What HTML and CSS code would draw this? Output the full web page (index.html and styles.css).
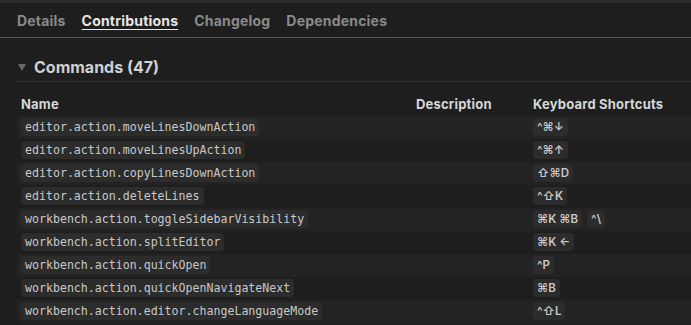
FILE: index.html
```html
<!DOCTYPE html>
<html lang="en">
<head>
    <meta charset="UTF-8">
    <title>Extension - Contributions</title>
    <link rel="stylesheet" href="styles.css">
</head>
<body>
    <div class="top-strip"></div>
    <div class="tabs">
        <span class="tab">Details</span>
        <span class="tab active">Contributions</span>
        <span class="tab">Changelog</span>
        <span class="tab">Dependencies</span>
    </div>
    <div class="content">
        <div class="section-title">
            <span class="twistie"></span>
            <span>Commands (47)</span>
        </div>
        <table class="commands">
            <thead>
                <tr>
                    <th class="col-name">Name</th>
                    <th class="col-desc">Description</th>
                    <th>Keyboard Shortcuts</th>
                </tr>
            </thead>
            <tbody>
                <tr>
                    <td><code>editor.action.moveLinesDownAction</code></td>
                    <td></td>
                    <td><kbd>^⌘↓</kbd></td>
                </tr>
                <tr>
                    <td><code>editor.action.moveLinesUpAction</code></td>
                    <td></td>
                    <td><kbd>^⌘↑</kbd></td>
                </tr>
                <tr>
                    <td><code>editor.action.copyLinesDownAction</code></td>
                    <td></td>
                    <td><kbd>⇧⌘D</kbd></td>
                </tr>
                <tr>
                    <td><code>editor.action.deleteLines</code></td>
                    <td></td>
                    <td><kbd>^⇧K</kbd></td>
                </tr>
                <tr>
                    <td><code>workbench.action.toggleSidebarVisibility</code></td>
                    <td></td>
                    <td><kbd>⌘K ⌘B</kbd><kbd>^\</kbd></td>
                </tr>
                <tr>
                    <td><code>workbench.action.splitEditor</code></td>
                    <td></td>
                    <td><kbd>⌘K ←</kbd></td>
                </tr>
                <tr>
                    <td><code>workbench.action.quickOpen</code></td>
                    <td></td>
                    <td><kbd>^P</kbd></td>
                </tr>
                <tr>
                    <td><code>workbench.action.quickOpenNavigateNext</code></td>
                    <td></td>
                    <td><kbd>⌘B</kbd></td>
                </tr>
                <tr>
                    <td><code>workbench.action.editor.changeLanguageMode</code></td>
                    <td></td>
                    <td><kbd>^⇧L</kbd></td>
                </tr>
            </tbody>
        </table>
    </div>
</body>
</html>
```

FILE: styles.css
```css
body {
    margin: 0;
    background: #1e1e1e;
    color: #cccccc;
    font-family: Inter, "Liberation Sans", sans-serif;
    overflow: hidden;
}
.top-strip {
    height: 3px;
    background: #2b2b2b;
}
.tabs {
    display: flex;
    align-items: center;
    gap: 16px;
    height: 35px;
    padding-left: 17px;
    padding-top: 1px;
    box-sizing: border-box;
    border-bottom: 1px solid #555555;
}
.tab {
    font-size: 14px;
    font-weight: 700;
    letter-spacing: 0.2px;
    color: #8a8a8a;
}
.tab.active {
    color: #e6e6e6;
    text-decoration: underline;
    text-underline-offset: 3px;
}
.content {
    padding-left: 17px;
}
.section-title {
    display: flex;
    align-items: center;
    gap: 8px;
    height: 44px;
    padding-top: 15px;
    box-sizing: border-box;
    border-bottom: 1px solid #333333;
    font-size: 16px;
    font-weight: 700;
    color: #d0d0d0;
}
.twistie {
    width: 0;
    height: 0;
    margin-left: 1px;
    border-left: 4px solid transparent;
    border-right: 4px solid transparent;
    border-top: 7px solid #666666;
}
.commands {
    width: 100%;
    margin-top: 9px;
    border-collapse: collapse;
}
.commands th {
    height: 25px;
    padding: 0 4px;
    text-align: left;
    font-size: 13px;
    font-weight: 700;
    letter-spacing: 0.2px;
    color: #d6d6d6;
}
.col-name {
    width: 387px;
}
.col-desc {
    width: 109px;
}
.commands td {
    padding: 2px 4px 3px;
    line-height: 18px;
    font-size: 0;
}
.commands tbody tr:nth-child(odd) {
    background: #232323;
}
code, kbd {
    display: inline-block;
    height: 18px;
    line-height: 18px;
    padding: 0 4px;
    border-radius: 4px;
    background: #2c2c2c;
    color: #c8c8c8;
    vertical-align: top;
}
code {
    font-family: "DejaVu Sans Mono", monospace;
    font-size: 11.6px;
}
kbd {
    font-family: Inter, "DejaVu Sans", sans-serif;
    font-size: 11.5px;
    font-weight: 600;
    margin-right: 5px;
}
```
